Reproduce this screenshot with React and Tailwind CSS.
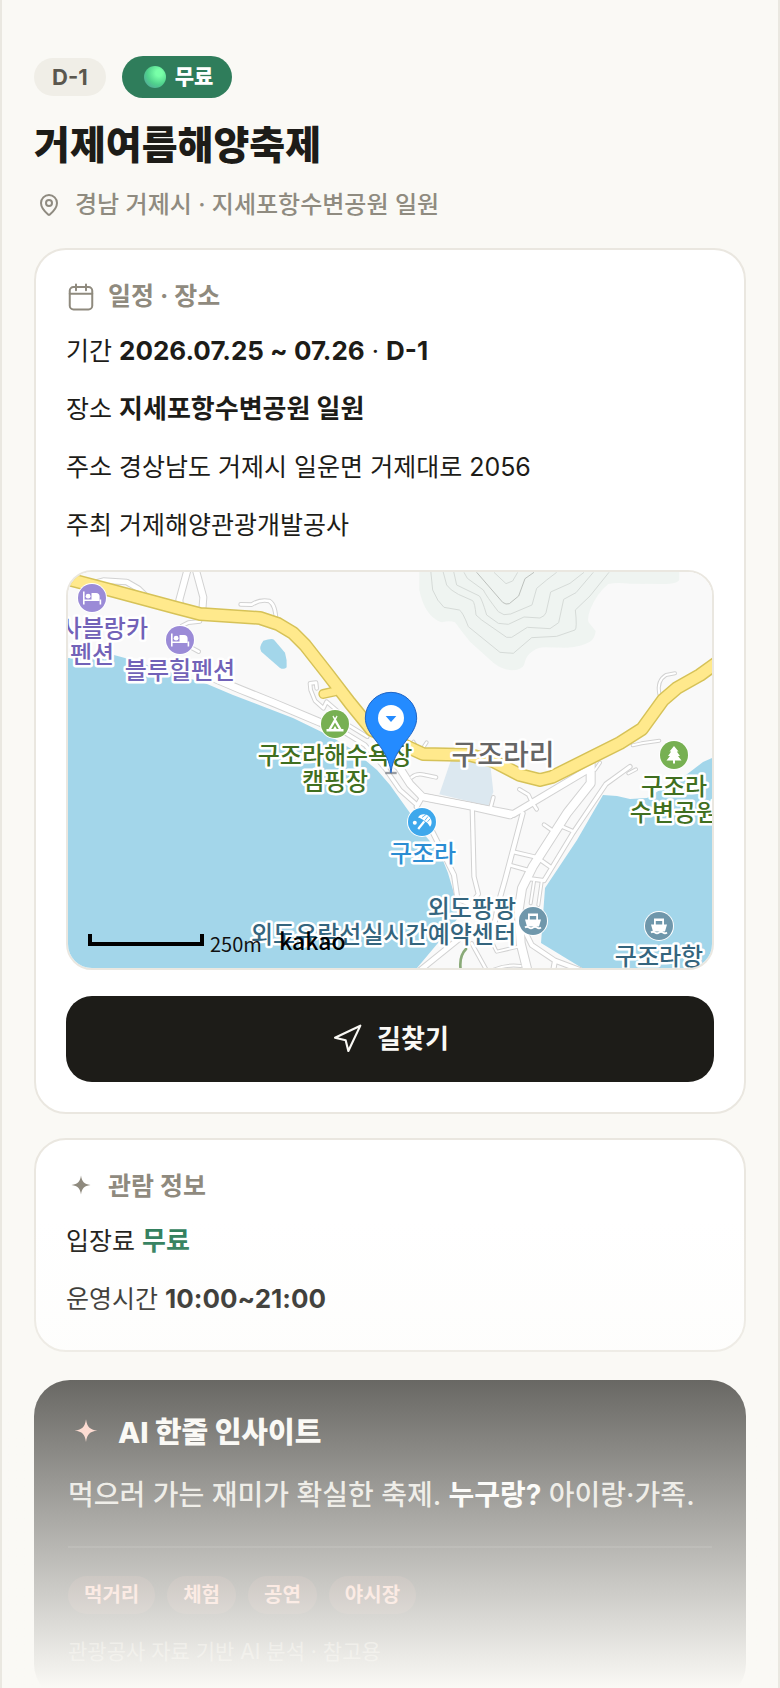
import React from "react";
import { MapPin, Navigation } from "lucide-react";

const LAND_PARTS = {
  northWest: "translate(-8 -12) scale(0.33333)",
  northEast: "translate(322 -12) scale(0.33333)",
  southEast: "translate(322 198) scale(0.33333)",
  centre: "translate(242 88) scale(0.33333)",
};

const ROADS = [
  ["northWest", 20, "M70 78 L130 62 L200 66 L235 86 L275 125"],
  ["northWest", 24, "M385 20 L358 120 L362 150"],
  ["northWest", 24, "M405 20 L430 112 L427 150"],
  ["northWest", 14, "M542 133 L575 134 Q600 117 628 123 Q648 135 648 185"],
  ["northWest", 14, "M365 198 L385 188 L420 184"],
  ["northWest", 14, "M385 258 L416 275"],
  ["northWest", 14, "M770 385 L768 368 L750 370 L752 390 L765 422 L790 445 L800 425 L835 455"],
  ["northWest", 26, "M455 352 L540 388 L640 428 L780 487 L830 510"],
  ["northWest", 14, "M840 480 L922 530"],
  ["centre", 16, "M0 172 L100 215 L165 255 L225 325 L270 390 L322 436"],
  ["centre", 26, "M250 300 L270 325 L300 372 L337 410 L480 438 L600 465"],
  ["centre", 18, "M337 410 L320 440"],
  ["centre", 14, "M305 352 Q320 338 345 345 L378 352"],
  ["centre", 12, "M310 245 L318 258 M340 262 L350 247"],
  ["southEast", 24, "M95 80 L370 132 L600 -5"],
  ["southEast", 18, "M122 175 L160 250 L192 315 L202 385 L235 400"],
  ["southEast", 16, "M247 120 L252 320 L265 372 L240 405"],
  ["southEast", 18, "M398 130 L345 330 L325 400 L310 480"],
  ["southEast", 15, "M372 246 L440 262 L480 290 M362 286 L412 300"],
  ["southEast", 16, "M720 -10 L648 42 L548 190 L462 332 L412 325"],
  ["southEast", 14, "M512 168 L552 185 M462 164 L485 180"],
  ["southEast", 14, "M440 118 L425 95 L415 74 L388 58"],
  ["southEast", 12, "M432 335 L422 400 M455 335 L445 405"],
  ["southEast", 18, "M408 490 L425 525 L495 572 L570 600 M495 572 L488 610"],
  ["southEast", 20, "M205 508 L85 605"],
  ["southEast", 14, "M245 520 L292 605"],
  ["southEast", 12, "M310 525 L320 545 L385 530 M300 605 Q340 582 392 588"],
  ["southEast", 14, "M310 82 L302 112"],
  ["southEast", 30, "M602 -20 L602 40 L532 128 L428 290 L396 355 L386 420 L392 520 L412 600"],
  ["northEast", 12, "M855 340 L828 345 Q800 362 808 402"],
  ["northEast", 12, "M728 556 L755 550 L808 542"],
  ["northEast", 12, "M630 608 L615 630 M738 628 L715 640"],
];

const HIGHWAY =
  "M-4 6 L42 18 L109 36 L132 42 L192 46 L210 52 L225 61 L237 73 L259 101 L282 131 L304 158 L342 176 L355 182 L402 183 L425 189 L452 203 L472 208 L484 205 L552 171 L574 157 L595 128 L609 116 L632 103 L650 90";

function Road({ part, width, d, color }) {
  return (
    <g transform={LAND_PARTS[part]}>
      <path d={d} stroke={color} strokeWidth={width} />
    </g>
  );
}

function MapLabel({ x, y, color, anchor = "middle", size = 24, children }) {
  return (
    <text
      x={x}
      y={y}
      fill={color}
      stroke="#ffffff"
      strokeWidth="5"
      strokeLinejoin="round"
      paintOrder="stroke"
      textAnchor={anchor}
      fontSize={size}
      fontWeight="500"
    >
      {children}
    </text>
  );
}

function Poi({ x, y, color, children }) {
  return (
    <g transform={`translate(${x} ${y})`}>
      <circle r="15" fill="#ffffff" />
      <circle r="14" fill={color} />
      {children}
    </g>
  );
}

function Bed() {
  return (
    <g fill="#ffffff">
      <path d="M-9 -6.500h1.600V3H7.600V-1.500C7.600 -3.500 6.500 -5 4 -5H-0.500V1.400H-7.400V6.500H-9Z" />
      <path d="M7.600 1.400H9.200V6.500H7.600Z" />
      <circle cx="-3.900" cy="-1.800" r="2.400" />
    </g>
  );
}

function Ship() {
  return (
    <g fill="#ffffff">
      <path d="M-5 -7.500H5V-1.500H8L6 5.500H-6L-8 -1.500H-5ZM-3.200 -5V-1.500H3.200V-5Z" fillRule="evenodd" />
      <path d="M-8 6.500Q-6 5 -4 6.500T0 6.500T4 6.500T8 6.500" fill="none" stroke="#ffffff" strokeWidth="1.800" />
    </g>
  );
}

function VenueMap() {
  return (
    <svg
      viewBox="0 0 644 396"
      preserveAspectRatio="xMidYMid slice"
      className="block h-full w-full"
      role="img"
      fontFamily="'Noto Sans CJK KR', sans-serif"
    >
      <rect width="644" height="396" fill="#f9f9f9" />
      <g transform={LAND_PARTS.northEast} fill="none" strokeWidth="3" stroke="#d5dad7">
        <path
          d="M88 30V90Q95 125 110 150Q130 180 155 187Q180 180 195 187Q215 215 240 245L310 308Q335 328 365 331Q395 330 402 315Q408 290 420 280Q440 262 460 262L530 263Q575 260 600 245Q615 235 617 213L597 188Q590 180 600 150Q620 100 655 72Q680 66 720 71L830 72Q862 70 868 60V30Z"
          fill="#eff4f1"
          stroke="none"
        />
        <path d="M122 30L128 90Q142 125 162 142L208 150Q218 155 235 200L330 277L370 280L425 233L500 229L555 210Q562 205 556 150L600 108L657 37" />
        <path d="M158 30L170 75Q180 90 205 103L248 122Q255 130 258 165L275 180L350 232H365L412 202L480 206L506 188L521 118L558 98L610 37" />
        <path d="M190 30L200 75L268 108Q275 115 290 165L325 190L355 193L402 171L450 174Q465 168 468 158L482 96L540 70L582 37" />
        <path d="M222 37L232 55L280 90Q290 110 325 155L342 164L362 162L426 135L440 85L470 60L500 37" />
        <path d="M260 37L338 127Q348 135 358 131L386 108L405 56L432 37" stroke="#bcc0bc" />
        <path d="M312 37L348 71L368 63L383 37" />
      </g>
      <path
        d="M0 86H25L46 83L57 86L139 112L165 123L225 146L262 164L285 178L309 198L322 213L342 241L355 261L372 281L380 301L387 325L390 346L375 365L349 396H0Z"
        fill="#a3d6ea"
      />
      <path
        d="M644 186L635 190L618 203L600 213L579 226L562 227L549 224L535 223L509 268L477 316L473 371L514 396H644Z"
        fill="#a3d6ea"
      />
      <g transform={LAND_PARTS.northWest}>
        <path d="M610 242Q635 234 642 239L675 278Q682 300 680 322Q672 330 660 324L604 275Q595 262 610 242Z" fill="#a3d6ea" />
      </g>
      <g transform={LAND_PARTS.centre}>
        <path d="M422 303L540 305L550 395L535 438L388 403Z" fill="#dce8f0" />
      </g>
      <g fill="none" strokeLinecap="round" strokeLinejoin="round">
        {ROADS.map(([part, width, d], i) => (
          <Road key={i} part={part} width={width} d={d} color="#d2d2d2" />
        ))}
        {ROADS.map(([part, width, d], i) => (
          <Road key={i} part={part} width={width - 6} d={d} color="#ffffff" />
        ))}
        <g transform={LAND_PARTS.northWest}>
          <path d="M790 402L825 394" stroke="#d6c258" strokeWidth="30" />
        </g>
        <path d={HIGHWAY} stroke="#d6c258" strokeWidth="14" />
        <path d={HIGHWAY} stroke="#ffe98c" strokeWidth="11" />
        <g transform={LAND_PARTS.northWest}>
          <path d="M790 402L825 394" stroke="#ffe98c" strokeWidth="22" />
        </g>
        <g transform={LAND_PARTS.southEast}>
          <path d="M228 537Q205 560 213 605" stroke="#8aaa78" strokeWidth="8" />
        </g>
      </g>

      <MapLabel x={80} y={65} color="#7262b8" anchor="end">사블랑카</MapLabel>
      <MapLabel x={24} y={91} color="#7262b8">펜션</MapLabel>
      <MapLabel x={112} y={107} color="#7262b8">블루힐펜션</MapLabel>
      <MapLabel x={267} y={192} color="#406f20">구조라해수욕장</MapLabel>
      <MapLabel x={267} y={218} color="#406f20">캠핑장</MapLabel>
      <MapLabel x={435} y={193} color="#666666" size={28}>구조라리</MapLabel>
      <MapLabel x={355} y={290} color="#2b8dd3">구조라</MapLabel>
      <MapLabel x={448} y={345} color="#34657e" anchor="end">외도팡팡</MapLabel>
      <MapLabel x={448} y={371} color="#34657e" anchor="end">외도유람선실시간예약센터</MapLabel>
      <MapLabel x={606} y={223} color="#406f20">구조라</MapLabel>
      <MapLabel x={606} y={249} color="#406f20">수변공원</MapLabel>
      <MapLabel x={591} y={393} color="#34657e">구조라항</MapLabel>

      <Poi x={24} y={26} color="#9b8bd7"><Bed /></Poi>
      <Poi x={112} y={68} color="#9b8bd7"><Bed /></Poi>
      <Poi x={267} y={152} color="#77b052">
        <path d="M-1.800 -8.500L0 -6L1.800 -8.500L2.500 -7.500L1 -4.500L6.500 5H8.500V7.500H-8.500V5H-6.500L-1 -4.500L-2.500 -7.500ZM0 -1.500L-3.800 5H-1.800L0 2L1.800 5H3.800Z" fill="#ffffff" fillRule="evenodd" />
      </Poi>
      <Poi x={606} y={183} color="#77b052">
        <path d="M0 -9L4.500 -3.500H2.800L6 1H4L7.500 5.500H1V8.500H-1V5.500H-7.500L-4 1H-6L-2.800 -3.500H-4.500Z" fill="#ffffff" />
      </Poi>
      <Poi x={354} y={250} color="#3ea8ec">
        <g fill="#ffffff" stroke="none">
          <circle cx="-7.200" cy="0.800" r="2" />
          <path d="M-4 -4.500C-1.500 -9 5 -8.500 8 -4.500C10.500 -1 9.800 2.800 8 4.800C6.500 1.500 4.500 0 2.800 -0.500C1 -2.500 -1.500 -4 -4 -4.500Z" />
          <path d="M2.200 -0.500L-3.800 7" stroke="#ffffff" strokeWidth="2.200" />
          <path d="M0 -4.500L4 -7.500M5.500 -0.200L8.500 -3.500M2.800 -1.500L6 -5.500" stroke="#3ea8ec" strokeWidth="0.800" />
        </g>
      </Poi>
      <Poi x={465} y={349} color="#6f97ab"><Ship /></Poi>
      <Poi x={591} y={354} color="#6f97ab"><Ship /></Poi>

      <g transform={LAND_PARTS.centre}>
        <path d="M226 339H260" stroke="#555b66" strokeOpacity="0.6" strokeWidth="7" />
        <path
          d="M243 338C238 290 212 262 190 232C175 212 166 194 166 174A77 77 0 0 1 320 174C320 194 311 212 296 232C274 262 248 290 243 338Z"
          fill="#248bff"
          stroke="#1e63c4"
          strokeWidth="3"
        />
        <circle cx="243" cy="174" r="39" fill="#ffffff" />
        <path d="M227 168H259L243 186Z" fill="#248bff" />
      </g>

      <path d="M22 362V372H134V362" fill="none" stroke="#000000" strokeWidth="4" />
      <text x="142" y="380" fontSize="20" fill="#111111">250m</text>
      <text x="211" y="378" fontSize="23" fontWeight="500" fill="#000000">kakao</text>
    </svg>
  );
}

function CalendarIcon() {
  return (
    <svg
      viewBox="0 0 24 24"
      className="size-[30px]"
      fill="none"
      stroke="currentColor"
      strokeWidth="1.6"
      strokeLinecap="round"
      strokeLinejoin="round"
      aria-hidden="true"
    >
      <rect x="3" y="4" width="18" height="18" rx="3" />
      <path d="M3 9.300h18M8 2v4.500M16 2v4.500" />
    </svg>
  );
}

function Sparkle({ className }) {
  return (
    <svg viewBox="0 0 30 30" className={className} aria-hidden="true">
      <path d="M15 3.500C16 10 18 12 24.500 13C18 14 16 16 15 22.500C14 16 12 14 5.500 13C12 12 14 10 15 3.500Z" fill="currentColor" />
    </svg>
  );
}

function Strong({ className = "", children }) {
  return <b className={`text-[26px] ${className}`}>{children}</b>;
}

function Card({ icon, title, children }) {
  return (
    <section className="rounded-[32px] border-2 border-[#eae7e0] bg-white p-[30px]">
      <h2 className="flex h-[34px] items-center gap-3 text-[25px] font-bold text-[#8f8a7e]">
        {icon}
        {title}
      </h2>
      <div className="mt-4 flex flex-col gap-4 text-[25px] leading-[42px]">{children}</div>
    </section>
  );
}

const TAGS = ["먹거리", "체험", "공연", "야시장"];

export default function App() {
  return (
    <div className="relative h-screen overflow-hidden border-x-2 border-[#eae8e1] bg-[#faf9f5] font-['Inter','Noto_Sans_CJK_KR',sans-serif] text-[#1d1c18]">
      <main className="px-8 pt-14">
        <div className="flex items-center gap-4">
          <span className="flex h-[38px] items-center rounded-full bg-[#f0eee7] px-[18px] text-[22px] font-bold text-[#5b574e]">
            D-1
          </span>
          <span className="flex h-[42px] items-center gap-[9px] rounded-full bg-[#2f7d5b] pr-[19px] pl-[22px] text-[21px] font-extrabold text-white">
            <span className="size-[22px] rounded-full bg-[radial-gradient(circle_at_68%_32%,#78ffa8_15%,#4fd08c_55%,#5593a0_100%)]" />
            무료
          </span>
        </div>
        <h1 className="mt-[22px] text-[39px] leading-[50px] font-extrabold">거제여름해양축제</h1>
        <p className="mt-[18px] flex items-center gap-[14px] pl-[3px] text-2xl leading-[34px] font-medium text-[#8f8b80]">
          <MapPin className="size-6" />
          경남 거제시 · 지세포항수변공원 일원
        </p>

        <div className="mt-[26px] flex flex-col gap-6">
          <Card icon={<CalendarIcon />} title="일정 · 장소">
            <p>기간 <Strong>2026.07.25 ~ 07.26</Strong> · <Strong>D-1</Strong></p>
            <p>장소 <Strong>지세포항수변공원 일원</Strong></p>
            <p>주소 경상남도 거제시 일운면 거제대로 2056</p>
            <p>주최 거제해양관광개발공사</p>
            <div className="mt-2 h-[400px] overflow-hidden rounded-[26px] border-2 border-[#eae7e0]">
              <VenueMap />
            </div>
            <button
              type="button"
              className="mt-[10px] flex h-[86px] w-full items-center justify-center gap-[14px] rounded-[26px] bg-[#1d1c18] text-[26px] font-bold text-[#faf9f5]"
            >
              <Navigation className="size-8" strokeWidth={1.6} />
              길찾기
            </button>
          </Card>

          <Card icon={<Sparkle className="size-[30px]" />} title="관람 정보">
            <p>입장료 <Strong className="text-[#2f7d5b]">무료</Strong></p>
            <p>운영시간 <Strong>10:00~21:00</Strong></p>
          </Card>
        </div>

        <section className="mt-7 rounded-[36px] bg-[#1d1c18] p-[34px]">
          <h2 className="flex h-[38px] items-center gap-[14px] text-[29px] font-extrabold text-[#faf9f5]">
            <Sparkle className="size-9 text-[#ffc4b5]" />
            AI 한줄 인사이트
          </h2>
          <p className="mt-5 text-[28px] leading-[46px] font-medium text-[#dfddd6]">
            먹으러 가는 재미가 확실한 축제. <b className="text-white">누구랑?</b> 아이랑·가족.
          </p>
          <ul className="mt-7 flex gap-3 border-t-2 border-white/10 pt-7">
            {TAGS.map((tag) => (
              <li
                key={tag}
                className="flex h-[38px] items-center rounded-full bg-[#ff8c78]/15 px-4 text-xl font-bold text-[#ffb4a2]"
              >
                {tag}
              </li>
            ))}
          </ul>
          <p className="mt-6 text-[21px] leading-7 text-[#8f8b80]">관광공사 자료 기반 AI 분석 · 참고용</p>
        </section>
      </main>
      <div className="pointer-events-none absolute inset-x-0 bottom-0 h-[468px] bg-linear-to-b from-[#faf9f5]/0 to-[#faf9f5]" />
    </div>
  );
}
